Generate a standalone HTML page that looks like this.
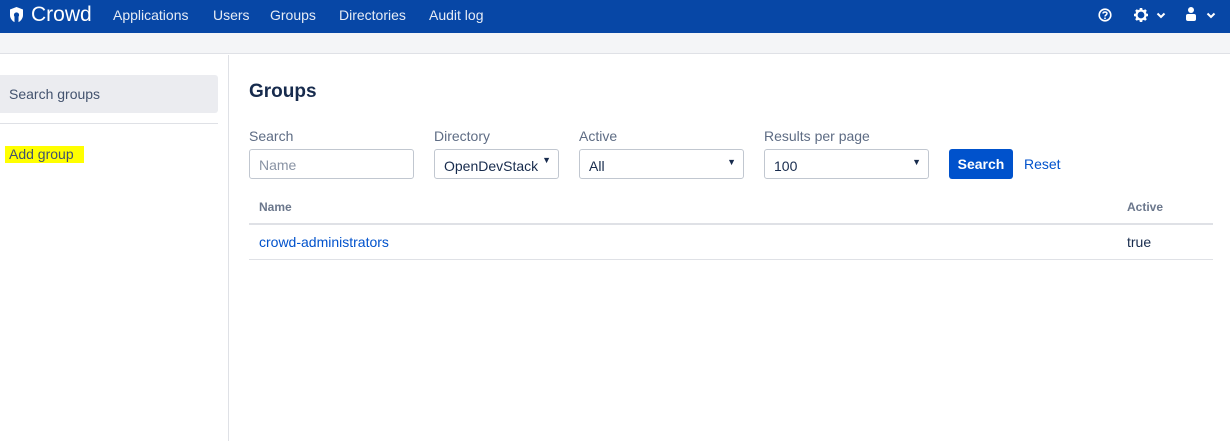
<!DOCTYPE html>
<html><head><style>
*{box-sizing:border-box;margin:0;padding:0}
body{width:1230px;height:441px;overflow:hidden;font-family:"Liberation Sans",sans-serif;font-size:14px;color:#172b4d;background:#fff;position:relative}
.hdr{position:absolute;left:0;top:0;width:1230px;height:33px;background:#0747a6;color:#fff}
.hdr span{position:absolute;top:7px;font-size:14px;color:#e6ecf5}
.band{position:absolute;top:33px;left:0;width:1230px;height:21px;background:#f4f5f7;border-bottom:1px solid #dfe1e6}
.side{position:absolute;top:55px;left:228px;width:1px;height:386px;background:#dfe1e6}
.abs{position:absolute}
.inp{position:absolute;height:30px;border:1px solid #c1c7d0;border-radius:3px;background:#fff;font-size:14px;padding:8px 0 0 9px}
.lbl{position:absolute;top:128px;font-size:14px;color:#5e6c84}
.arr{position:absolute;right:7px;top:7px;font-size:9px;color:#172b4d}
</style></head><body>
<div class="hdr">
<svg class="abs" style="left:8px;top:6px" width="17" height="18" viewBox="0 0 17 18"><path d="M8.5 1 L15 3.5 V9 C15 13 12 16 8.5 17 C5 16 2 13 2 9 V3.5 Z" fill="#fff"/><circle cx="8.5" cy="9" r="2.6" fill="#0747a6"/><rect x="6.5" y="10" width="4" height="7" fill="#0747a6"/></svg>
<span style="left:31px;top:3px;font-size:21px;color:#fff">Crowd</span>
<span style="left:113px">Applications</span>
<span style="left:213px">Users</span>
<span style="left:270px">Groups</span>
<span style="left:339px">Directories</span>
<span style="left:429px">Audit log</span>
<svg class="abs" style="left:1098px;top:8px" width="14" height="14" viewBox="0 0 14 14"><circle cx="7" cy="7" r="5.8" fill="none" stroke="#fff" stroke-width="1.6"/><path d="M5 5.5 C5 3.5 9 3.5 9 5.5 C9 7 7 7 7 8.5" fill="none" stroke="#fff" stroke-width="1.5"/><circle cx="7" cy="10.3" r="0.9" fill="#fff"/></svg>
<svg class="abs" style="left:1133px;top:7px" width="16" height="16" viewBox="0 0 16 16"><circle cx="8" cy="8" r="4.5" fill="none" stroke="#fff" stroke-width="2.2"/><g stroke="#fff" stroke-width="2.6"><path d="M8 1v3M8 12v3M1 8h3M12 8h3M3 3l2 2M11 11l2 2M3 13l2-2M11 5l2-2"/></g></svg>
<svg class="abs" style="left:1156px;top:12px" width="10" height="7" viewBox="0 0 10 7"><path d="M1.5 1.5 L5 5 L8.5 1.5" fill="none" stroke="#fff" stroke-width="2"/></svg>
<svg class="abs" style="left:1185px;top:6px" width="12" height="16" viewBox="0 0 12 16"><circle cx="6" cy="4" r="3" fill="#fff"/><rect x="1" y="8" width="10" height="7" rx="2" fill="#fff"/></svg>
<svg class="abs" style="left:1206px;top:12px" width="10" height="7" viewBox="0 0 10 7"><path d="M1.5 1.5 L5 5 L8.5 1.5" fill="none" stroke="#fff" stroke-width="2"/></svg>
</div>
<div class="band"></div>
<div class="side"></div>
<div class="abs" style="left:0;top:75px;width:218px;height:38px;background:#ebecf0;border-radius:0 3px 3px 0;padding:11px 0 0 9px;color:#42526e">Search groups</div>
<div class="abs" style="left:0;top:123px;width:218px;height:1px;background:#dfe1e6"></div>
<div class="abs" style="left:5px;top:146px;width:79px;height:17px;background:#ffff00;color:#42526e;padding:0 0 0 4px;line-height:16px">Add group</div>
<div class="abs" style="left:249px;top:81px;font-size:19px;font-weight:bold;color:#172b4d">Groups</div>
<div class="lbl" style="left:249px">Search</div>
<div class="lbl" style="left:434px">Directory</div>
<div class="lbl" style="left:579px">Active</div>
<div class="lbl" style="left:764px">Results per page</div>
<div class="inp" style="left:249px;top:149px;width:165px;color:#8993a4;padding-top:7px">Name</div>
<div class="inp" style="left:434px;top:149px;width:125px">OpenDevStack<span class="arr" style="top:5px">▼</span></div>
<div class="inp" style="left:579px;top:149px;width:165px">All<span class="arr">▼</span></div>
<div class="inp" style="left:764px;top:149px;width:165px">100<span class="arr">▼</span></div>
<div class="abs" style="left:949px;top:149px;width:64px;height:30px;background:#0052cc;color:#fff;border-radius:3px;font-weight:bold;text-align:center;line-height:30px">Search</div>
<div class="abs" style="left:1024px;top:156px;color:#0052cc">Reset</div>
<div class="abs" style="left:259px;top:200px;font-size:12px;font-weight:bold;color:#6b778c">Name</div>
<div class="abs" style="left:1127px;top:200px;font-size:12px;font-weight:bold;color:#6b778c">Active</div>
<div class="abs" style="left:249px;top:223px;width:964px;height:2px;background:#dfe1e6"></div>
<div class="abs" style="left:259px;top:234px;color:#0052cc">crowd-administrators</div>
<div class="abs" style="left:1127px;top:234px">true</div>
<div class="abs" style="left:249px;top:259px;width:964px;height:1px;background:#dfe1e6"></div>
</body></html>
